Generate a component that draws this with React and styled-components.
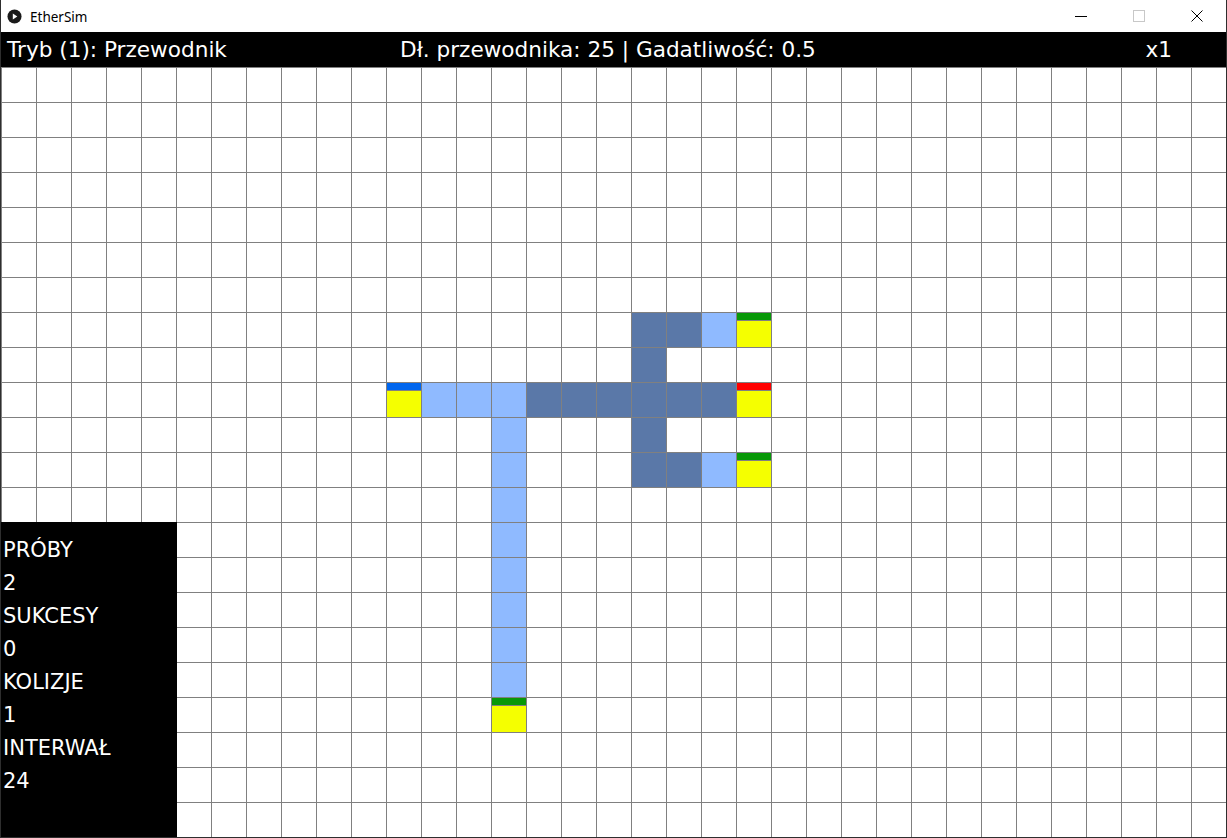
import React from "react";
import styled, { createGlobalStyle } from "styled-components";

const COLS = 35;
const ROWS = 22;
const LINE = "#808080";

const LIGHT = "#8fbaff";
const DARK = "#5a78a8";
const YELLOW = "#f5ff00";
const GREEN = "#089808";
const RED = "#ff0000";
const BLUE = "#0066ee";

// canvas row numbers (row 0 is under the header bar)
const paint = {};
const put = (c, r, bg, strip) => {
  paint[`${c},${r - 1}`] = { bg, strip };
};
put(11, 10, YELLOW, BLUE);
[12, 13, 14].forEach((c) => put(c, 10, LIGHT));
for (let r = 11; r <= 18; r++) put(14, r, LIGHT);
put(14, 19, YELLOW, GREEN);
[15, 16, 17, 18, 19, 20].forEach((c) => put(c, 10, DARK));
put(21, 10, YELLOW, RED);
put(18, 8, DARK);
put(19, 8, DARK);
put(20, 8, LIGHT);
put(21, 8, YELLOW, GREEN);
put(18, 9, DARK);
put(18, 11, DARK);
put(18, 12, DARK);
put(19, 12, DARK);
put(20, 12, LIGHT);
put(21, 12, YELLOW, GREEN);

const stats = [
  ["PRÓBY", 2],
  ["SUKCESY", 0],
  ["KOLIZJE", 1],
  ["INTERWAŁ", 24],
];

const GlobalStyle = createGlobalStyle`
  html, body {
    margin: 0;
    padding: 0;
    background: #ffffff;
  }
`;

const Window = styled.div`
  width: 1227px;
  height: 838px;
  box-sizing: border-box;
  border: 1px solid #2e2e2e;
  border-top: none;
  display: flex;
  flex-direction: column;
  overflow: hidden;
`;

const TitleBar = styled.div`
  height: 32px;
  flex: none;
  display: flex;
  align-items: center;
  background: #ffffff;
  font-family: "Noto Sans", "Open Sans", sans-serif;
  font-size: 13.5px;
  color: #000;
`;

const AppIcon = styled.svg`
  width: 15px;
  height: 15px;
  margin: 0 8px 0 6px;
`;

const Title = styled.span`
  flex: 1;
  padding-top: 1px;
`;

const Controls = styled.div`
  display: flex;
  height: 100%;
`;

const ControlButton = styled.div`
  width: 58px;
  height: 100%;
  display: flex;
  align-items: center;
  justify-content: center;
  color: ${(p) => (p.$disabled ? "#c8c8c8" : "#000")};
`;

const Canvas = styled.div`
  position: relative;
  flex: 1;
  display: flex;
  flex-direction: column;
  font-family: "DejaVu Sans", "Liberation Sans", sans-serif;
  font-size: 21px;
  color: #ffffff;
`;

const Header = styled.div`
  height: 35px;
  flex: none;
  background: #000;
  display: grid;
  grid-template-columns: 393px auto 1fr;
  align-items: center;
  padding: 0 54px 0 6px;
  white-space: nowrap;
  font-size: 21.6px;
`;

const HeaderText = styled.span`
  text-align: ${(p) => p.$align || "left"};
  line-height: 35px;
`;

const Grid = styled.div`
  display: grid;
  grid-template-columns: repeat(${COLS}, 35px);
  grid-template-rows: repeat(${ROWS}, 35px);
`;

const Cell = styled.div`
  box-sizing: border-box;
  border-left: 1px solid ${LINE};
  border-top: 1px solid ${LINE};
  background: ${(p) => p.$bg || "#ffffff"};
  display: flex;
  flex-direction: column;
`;

const Strip = styled.div`
  height: 7px;
  flex: none;
  background: ${(p) => p.$color};
  border-bottom: 1px solid ${LINE};
`;

const StatsPanel = styled.div`
  position: absolute;
  left: 0;
  bottom: 0;
  width: 176px;
  height: 315px;
  background: #000;
  padding: 12px 0 0 2px;
  box-sizing: border-box;
`;

const StatLine = styled.div`
  height: 33px;
  line-height: 33px;
`;

function PlayIcon() {
  return (
    <AppIcon viewBox="0 0 16 16">
      <circle cx="8" cy="8" r="7.5" fill="#1a1a1a" />
      <path d="M6.2 4.8 L11 8 L6.2 11.2 Z" fill="#ffffff" />
    </AppIcon>
  );
}

export default function App() {
  const cells = [];
  for (let r = 0; r < ROWS; r++) {
    for (let c = 0; c < COLS; c++) {
      const p = paint[`${c},${r}`];
      cells.push(
        <Cell key={`${c}-${r}`} $bg={p && p.bg}>
          {p && p.strip && <Strip $color={p.strip} />}
        </Cell>
      );
    }
  }

  return (
    <>
      <GlobalStyle />
      <Window>
        <TitleBar>
          <PlayIcon />
          <Title>EtherSim</Title>
          <Controls>
            <ControlButton>
              <svg width="12" height="12" viewBox="0 0 12 12">
                <line x1="0" y1="6.5" x2="12" y2="6.5" stroke="currentColor" strokeWidth="1" />
              </svg>
            </ControlButton>
            <ControlButton $disabled>
              <svg width="12" height="12" viewBox="0 0 12 12">
                <rect x="0.5" y="0.5" width="11" height="11" fill="none" stroke="currentColor" strokeWidth="1" />
              </svg>
            </ControlButton>
            <ControlButton>
              <svg width="12" height="12" viewBox="0 0 12 12">
                <path d="M0.5 0.5 L11.5 11.5 M11.5 0.5 L0.5 11.5" stroke="currentColor" strokeWidth="1" />
              </svg>
            </ControlButton>
          </Controls>
        </TitleBar>
        <Canvas>
          <Header>
            <HeaderText>Tryb (1): Przewodnik</HeaderText>
            <HeaderText>Dł. przewodnika: 25 | Gadatliwość: 0.5</HeaderText>
            <HeaderText $align="right">x1</HeaderText>
          </Header>
          <Grid>{cells}</Grid>
          <StatsPanel>
            {stats.map(([label, value]) => (
              <React.Fragment key={label}>
                <StatLine>{label}</StatLine>
                <StatLine>{value}</StatLine>
              </React.Fragment>
            ))}
          </StatsPanel>
        </Canvas>
      </Window>
    </>
  );
}
